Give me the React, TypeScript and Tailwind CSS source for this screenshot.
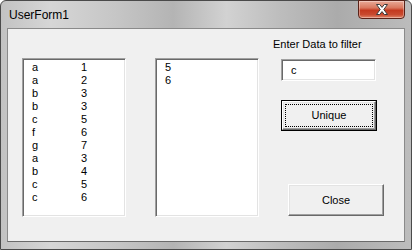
import React from 'react';

const rows: [string, string][] = [
  ['a', '1'],
  ['a', '2'],
  ['b', '3'],
  ['b', '3'],
  ['c', '5'],
  ['f', '6'],
  ['g', '7'],
  ['a', '3'],
  ['b', '4'],
  ['c', '5'],
  ['c', '6'],
];

const sunken =
  'border border-t-[#a0a0a0] border-l-[#a0a0a0] border-r-white border-b-white shadow-[inset_1px_1px_0_#696969,inset_-1px_-1px_0_#e3e3e3] bg-white';

export default function App() {
  return (
    <div className="w-[412px] h-[250px] bg-white">
      {/* Window frame */}
      <div className="w-[412px] h-[250px] flex flex-col rounded-t-[6px] border border-[#4a4a4a] bg-[linear-gradient(90deg,#c2c2c2_0%,#d6d6d6_12%,#c6c6c6_28%,#b4b4b4_42%,#d2d2d2_55%,#bdbdbd_68%,#ababab_82%,#bcbcbc_100%)] font-['Liberation_Sans',Arial,sans-serif]">
        {/* Title bar */}
        <div className="h-[27px] flex items-start justify-between pl-[8px] pr-[6px]">
          <span className="mt-[7px] text-[12px] leading-[14px] text-black">UserForm1</span>
          <div className="w-[47px] h-[19px] -mt-px flex items-center justify-center rounded-b-[4px] border border-[#5a2218] bg-[linear-gradient(180deg,#e9aa98_0%,#d9785f_40%,#c4391f_55%,#c94a2f_80%,#e0866a_100%)] shadow-[inset_0_0_0_1px_rgba(255,255,255,0.35)]">
            <svg width="14" height="11" viewBox="0 0 14 11">
              <path
                d="M1.5 0.5h3.2L7 3.4 9.3 0.5h3.2L8.8 5.5l3.7 5h-3.2L7 7.6 4.7 10.5H1.5l3.7-5z"
                fill="#ffffff"
                stroke="#3b3b3b"
                strokeWidth="1"
                strokeLinejoin="round"
              />
            </svg>
          </div>
        </div>

        {/* Client area */}
        <div className="flex-1 mx-[6px] mb-[7px] border border-t-[#8a8a8a] border-l-[#8a8a8a] border-r-[#8a8a8a] border-b-[#6a6a6a] bg-[#f0f0f0] flex pl-[14px] pt-[9px] text-[11px] text-black">
          {/* List 1 */}
          <div className={`mt-[20px] w-[104px] h-[159px] ${sunken} pl-[9px] pt-[2px]`}>
            {rows.map(([a, b], i) => (
              <div key={i} className="flex h-[13px] leading-[13px]">
                <span className="w-[49px]">{a}</span>
                <span>{b}</span>
              </div>
            ))}
          </div>

          {/* List 2 */}
          <div className={`mt-[20px] ml-[29px] w-[104px] h-[159px] ${sunken} pl-[9px] pt-[2px]`}>
            <div className="h-[13px] leading-[13px]">5</div>
            <div className="h-[13px] leading-[13px]">6</div>
          </div>

          {/* Right column */}
          <div className="ml-[14px] flex flex-col items-start">
            <span className="h-[13px] leading-[13px]">Enter Data to filter</span>
            <div className={`mt-[8px] ml-[8px] w-[95px] h-[22px] ${sunken} flex items-center pl-[9px]`}>
              c
            </div>
            <button className="mt-[19px] ml-[8px] w-[96px] h-[31px] border border-black bg-[#f0f0f0] p-0">
              <div className="w-full h-full border border-t-white border-l-white border-r-[#696969] border-b-[#696969] shadow-[inset_-1px_-1px_0_#a0a0a0,inset_1px_1px_0_#e3e3e3] p-[2px]">
                <div className="w-full h-full border border-dotted border-black flex items-center justify-center">
                  Unique
                </div>
              </div>
            </button>
            <button className="mt-[53px] ml-[15px] w-[96px] h-[32px] border border-t-white border-l-white border-r-[#696969] border-b-[#696969] shadow-[inset_-1px_-1px_0_#a0a0a0,inset_1px_1px_0_#e3e3e3] bg-[#f0f0f0] flex items-center justify-center p-0">
              Close
            </button>
          </div>
        </div>
      </div>
    </div>
  );
}
